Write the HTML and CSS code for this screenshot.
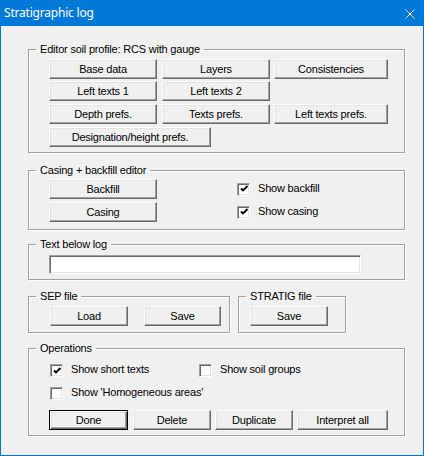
FILE: index.html
```html
<!DOCTYPE html>
<html>
<head>
<meta charset="utf-8">
<title>Stratigraphic log</title>
<link rel="stylesheet" href="styles.css">
</head>
<body>
<div class="window">
  <div class="titlebar">
    <span class="title">Stratigraphic log</span>
    <svg class="close" width="10" height="10" viewBox="0 0 10 10"><path d="M0.5 0.5 L9.5 9.5 M9.5 0.5 L0.5 9.5" stroke="#fff" stroke-width="1" fill="none"/></svg>
  </div>
  <div class="client">
    <fieldset class="group g-editor">
      <legend>Editor soil profile: RCS with gauge</legend>
      <div class="group-body editor-body">
        <div class="row">
          <button class="btn c1">Base data</button>
          <button class="btn c2">Layers</button>
          <button class="btn c3">Consistencies</button>
        </div>
        <div class="row r2">
          <button class="btn c1">Left texts 1</button>
          <button class="btn c2">Left texts 2</button>
        </div>
        <div class="row r3">
          <button class="btn c1">Depth prefs.</button>
          <button class="btn c2">Texts prefs.</button>
          <button class="btn c3">Left texts prefs.</button>
        </div>
        <div class="row r3">
          <button class="btn wide">Designation/height prefs.</button>
        </div>
      </div>
    </fieldset>

    <fieldset class="group g-casing">
      <legend>Casing + backfill editor</legend>
      <div class="group-body casing-body">
        <div class="row">
          <button class="btn c1">Backfill</button>
          <label class="check casing-check"><span class="box checked"><svg width="9" height="9" viewBox="0 0 9 9"><path d="M1 3.5 L3 5.5 L7.5 1" stroke="#000" stroke-width="1.9" fill="none"/></svg></span><span class="check-label">Show backfill</span></label>
        </div>
        <div class="row r3">
          <button class="btn c1">Casing</button>
          <label class="check casing-check"><span class="box checked"><svg width="9" height="9" viewBox="0 0 9 9"><path d="M1 3.5 L3 5.5 L7.5 1" stroke="#000" stroke-width="1.9" fill="none"/></svg></span><span class="check-label">Show casing</span></label>
        </div>
      </div>
    </fieldset>

    <fieldset class="group g-text">
      <legend>Text below log</legend>
      <div class="group-body text-body">
        <input class="field" type="text" value="">
      </div>
    </fieldset>

    <div class="file-row">
      <fieldset class="group g-sep">
        <legend>SEP file</legend>
        <div class="group-body sep-body">
          <div class="row">
            <button class="btn w78">Load</button>
            <button class="btn w77 sep-save">Save</button>
          </div>
        </div>
      </fieldset>
      <fieldset class="group g-stratig">
        <legend>STRATIG file</legend>
        <div class="group-body stratig-body">
          <div class="row">
            <button class="btn w78">Save</button>
          </div>
        </div>
      </fieldset>
    </div>

    <fieldset class="group g-ops">
      <legend>Operations</legend>
      <div class="group-body ops-body">
        <div class="row check-row">
          <label class="check first-check"><span class="box checked"><svg width="9" height="9" viewBox="0 0 9 9"><path d="M1 3.5 L3 5.5 L7.5 1" stroke="#000" stroke-width="1.9" fill="none"/></svg></span><span class="check-label">Show short texts</span></label>
          <label class="check"><span class="box"></span><span class="check-label">Show soil groups</span></label>
        </div>
        <div class="row check-row cr2">
          <label class="check"><span class="box"></span><span class="check-label">Show 'Homogeneous areas'</span></label>
        </div>
        <div class="row ops-buttons">
          <button class="btn default done">Done</button>
          <button class="btn w78 delete">Delete</button>
          <button class="btn w78 dup">Duplicate</button>
          <button class="btn interp">Interpret all</button>
        </div>
      </div>
    </fieldset>
  </div>
</div>
</body>
</html>
```

FILE: styles.css
```css
html, body {
  margin: 0;
  padding: 0;
  background: #f0f0f0;
}

.window {
  box-sizing: border-box;
  width: 424px;
  height: 456px;
  border: 1px solid #0078d7;
  background: #f0f0f0;
  font-family: "Liberation Sans", Arial, sans-serif;
  font-size: 11px;
  letter-spacing: -0.2px;
  color: #000;
}

.titlebar {
  height: 25px;
  background: #0078d7;
  display: flex;
  align-items: flex-start;
}

.title {
  flex: 1;
  font-family: "Noto Sans", "Liberation Sans", sans-serif;
  font-size: 12px;
  letter-spacing: -0.2px;
  line-height: 24px;
  color: #fff;
  padding-left: 3px;
}

.close {
  display: block;
  margin-top: 8px;
  margin-right: 8px;
}

.client {
  padding: 17px 0 0 27px;
}

.group {
  box-sizing: border-box;
  margin: 0;
  padding: 0;
  min-width: 0;
  border: 1px solid #a0a0a0;
  box-shadow: 1px 1px 0 #fff, inset 1px 1px 0 #fff;
  width: 377px;
}

.group legend {
  margin-left: 7px;
  padding: 0 4px;
  line-height: 13px;
  height: 13px;
}

.group-body {
  padding-left: 20px;
}

.row {
  display: flex;
  align-items: center;
}

.btn {
  box-sizing: border-box;
  height: 20px;
  margin: 0;
  padding: 0;
  font: inherit;
  letter-spacing: inherit;
  color: #000;
  line-height: 18px;
  background: #f0f0f0;
  border: 1px solid;
  border-color: #fff #696969 #696969 #fff;
  box-shadow: inset -1px -1px #a0a0a0, inset 1px 1px #e3e3e3;
  border-radius: 0;
  text-align: center;
  -webkit-appearance: none;
  appearance: none;
}

.btn.default {
  border: 1px solid #000;
  box-shadow: inset 1px 1px #fff, inset -1px -1px #696969, inset -2px -2px #a0a0a0, inset 2px 2px #e3e3e3;
}

.c1 { width: 108px; }
.c2 { width: 108px; margin-left: 5px; }
.c3 { width: 114px; margin-left: 4px; }
.wide { width: 162px; }
.w78 { width: 78px; }
.w77 { width: 77px; }

/* Editor group */
.g-editor { margin-top: 0; }
.editor-body { padding-top: 3px; padding-bottom: 5px; }
.r2 { margin-top: 2px; }
.r3 { margin-top: 3px; }

/* Checkboxes */
.check {
  display: flex;
  align-items: center;
  height: 13px;
}

.box {
  box-sizing: border-box;
  width: 13px;
  height: 13px;
  background: #fff;
  border: 1px solid;
  border-color: #a0a0a0 #fff #fff #a0a0a0;
  box-shadow: inset 1px 1px #696969, inset -1px -1px #e3e3e3;
  display: flex;
  align-items: center;
  justify-content: center;
  flex: none;
}

.box svg {
  display: block;
  margin: 1px 0 0 1px;
}

.check-label {
  margin-left: 8px;
  line-height: 13px;
  position: relative;
  top: -1px;
}

/* Casing group */
.g-casing { margin-top: 11px; }
.casing-body { padding-top: 2px; padding-bottom: 7px; }
.casing-check { margin-left: 80px; }

/* Text group */
.g-text { margin-top: 8px; }
.text-body { padding-top: 4px; padding-bottom: 5px; }

.field {
  box-sizing: border-box;
  display: block;
  width: 312px;
  height: 19px;
  margin: 0;
  padding: 0 3px;
  font: inherit;
  background: #fff;
  border: 1px solid;
  border-color: #a0a0a0 #fff #fff #a0a0a0;
  box-shadow: inset 1px 1px #696969, inset -1px -1px #e3e3e3;
  border-radius: 0;
  outline: none;
}

/* File groups */
.file-row {
  display: flex;
  margin-top: 10px;
}

.g-sep { width: 202px; }
.g-stratig { width: 108px; margin-left: 8px; }
.sep-body { padding: 3px 0 6px 21px; }
.sep-save { margin-left: 16px; }
.stratig-body { padding: 3px 0 6px 11px; }

/* Operations */
.g-ops { margin-top: 9px; }
.ops-body { padding-top: 9px; padding-bottom: 5px; }
.check-row { margin-left: 1px; height: 13px; }
.first-check { width: 149px; }
.cr2 { margin-top: 10px; }
.ops-buttons { margin-top: 10px; }
.done { width: 79px; }
.delete { margin-left: 5px; }
.dup { margin-left: 4px; }
.interp { width: 91px; margin-left: 4px; }
```
